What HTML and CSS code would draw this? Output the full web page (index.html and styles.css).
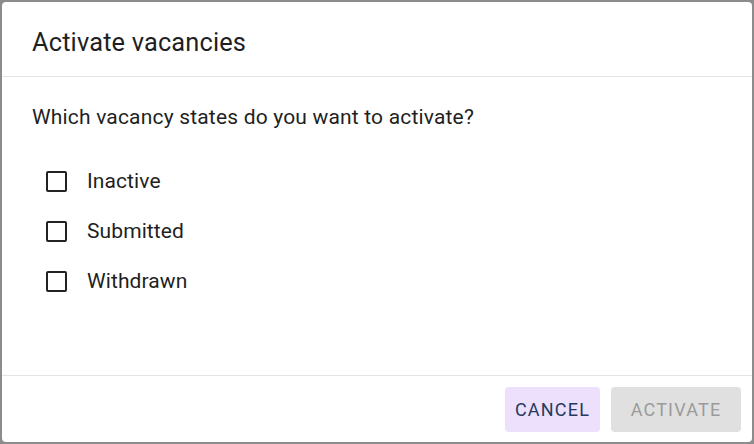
FILE: index.html
```html
<!DOCTYPE html>
<html lang="en">
<head>
<meta charset="UTF-8" />
<meta name="viewport" content="width=device-width, initial-scale=1" />
<title>Activate vacancies</title>
<link rel="stylesheet" href="styles.css">
</head>
<body>
  <div class="backdrop">
    <section class="dialog" role="dialog" aria-labelledby="dialogTitle">
      <header class="dialog-header">
        <h2 id="dialogTitle">Activate vacancies</h2>
      </header>

      <div class="dialog-body">
        <p class="question">Which vacancy states do you want to activate?</p>
        <ul class="state-list">
          <li><label class="check"><input type="checkbox" name="state" value="inactive" /><span class="box"></span>Inactive</label></li>
          <li><label class="check"><input type="checkbox" name="state" value="submitted" /><span class="box"></span>Submitted</label></li>
          <li><label class="check"><input type="checkbox" name="state" value="withdrawn" /><span class="box"></span>Withdrawn</label></li>
        </ul>
      </div>

      <footer class="dialog-actions">
        <button type="button" class="btn btn-cancel">Cancel</button>
        <button type="button" class="btn btn-activate" disabled>Activate</button>
      </footer>
    </section>
  </div>
</body>
</html>
```

FILE: styles.css
```css
:root {
  --backdrop: #8c8c8c;
  --divider: #e3e3e3;
  --text-color: #1f1f1f;
  --cancel-bg: #ede0fd;
  --cancel-text: #243a5e;
  --disabled-bg: #e0e0e0;
  --disabled-text: #9b9b9b;
  --font-family: Roboto, "Liberation Sans", sans-serif;
}
* {
  box-sizing: border-box;
}
html, body {
  margin: 0;
  padding: 0;
  height: 100%;
}
body {
  background: var(--backdrop);
  font-family: var(--font-family);
  color: var(--text-color);
}
.backdrop {
  height: 100%;
  padding: 2px;
}
.dialog {
  background: #fff;
  border-radius: 4px;
  height: 100%;
  display: flex;
  flex-direction: column;
}
.dialog-header {
  height: 75px;
  padding: 6px 30px 0;
  display: flex;
  align-items: center;
  border-bottom: 1px solid var(--divider);
}
.dialog-header h2 {
  margin: 0;
  font-size: 25.4px;
  font-weight: 400;
  letter-spacing: 0.15px;
}
.dialog-body {
  flex: 1;
  padding: 26px 30px 0;
}
.question {
  margin: 0;
  font-size: 21px;
  line-height: 28px;
  letter-spacing: 0.18px;
}
.state-list {
  list-style: none;
  margin: 37px 0 0;
  padding: 0 0 0 14px;
  display: grid;
  row-gap: 24px;
}
.check {
  display: flex;
  align-items: center;
  gap: 20px;
  height: 26px;
  font-size: 21px;
  letter-spacing: 0.1px;
  cursor: pointer;
}
.check input {
  position: absolute;
  opacity: 0;
  pointer-events: none;
}
.box {
  width: 21px;
  height: 21px;
  border: 2px solid #222;
  border-radius: 2px;
}
.dialog-actions {
  border-top: 1px solid var(--divider);
  padding: 11px 11px 10px;
  display: flex;
  justify-content: flex-end;
  gap: 11px;
}
.btn {
  height: 45px;
  border: none;
  border-radius: 4px;
  padding: 0;
  font-family: var(--font-family);
  font-size: 18px;
  font-weight: 400;
  letter-spacing: 1.2px;
  text-transform: uppercase;
  cursor: pointer;
}
.btn-cancel {
  background: var(--cancel-bg);
  color: var(--cancel-text);
  width: 95px;
}
.btn-activate {
  background: var(--disabled-bg);
  color: var(--disabled-text);
  width: 130px;
}
.btn-activate:disabled {
  cursor: default;
}
```
